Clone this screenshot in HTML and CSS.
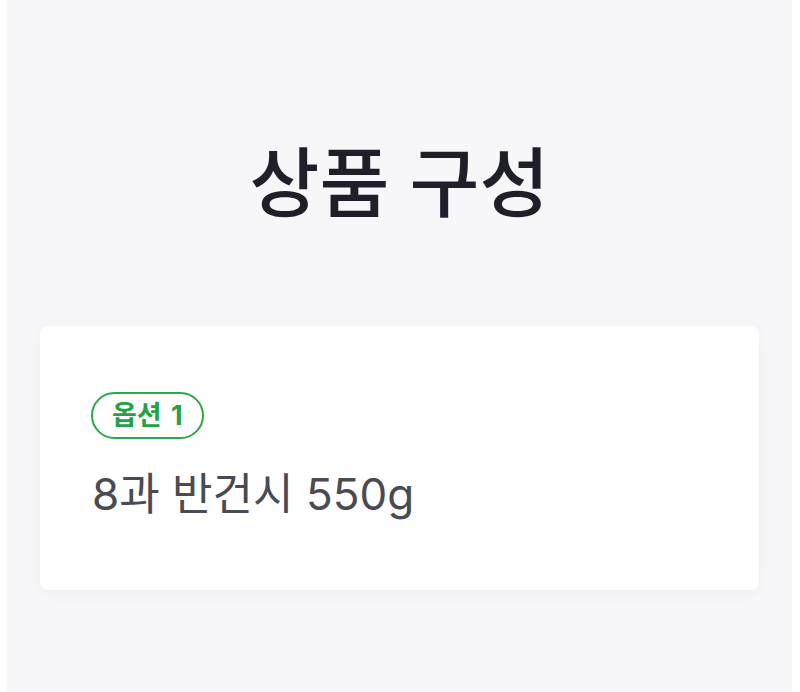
FILE: index.html
```html
<!DOCTYPE html>
<html>
    <head>
        <meta charset="UTF-8">
        <title>상품 구성</title>
        <link rel="stylesheet" href="styles.css">
    </head>
    <body>
        <article class="page">
            <!--제목-->
            <h1 class="title">상품 구성</h1>
            <!--구성 카드-->
            <div class="card">
                <span class="badge">옵션 1</span>
                <p class="item">8과 반건시 550g</p>
            </div>
        </article>
    </body>
</html>
```

FILE: styles.css
```css
body{
    margin: 0;
    background-color: white;
    font-family: 'Inter', 'Noto Sans CJK KR', sans-serif;
}
.page{
    margin: 0 8px 0 7px;
    height: 692px;
    background-color: #f7f7f9;
    padding: 128px 33px 0 33px;
    box-sizing: border-box;
}
.title{
    margin: 0;
    text-align: center;
    font-size: 76px;
    font-weight: 500;
    line-height: 110px;
    color: #1f1f29;
}
.card{
    margin-top: 88px;
    height: 264px;
    box-sizing: border-box;
    padding: 66px 52px 0 51px;
    background-color: white;
    border-radius: 8px;
    box-shadow: 0 4px 16px rgba(0, 0, 0, 0.04);
}
.badge{
    display: inline-block;
    height: 47px;
    line-height: 43px;
    padding: 0 19px;
    box-sizing: border-box;
    border: 2px solid #2aa84a;
    border-radius: 24px;
    color: #22a246;
    font-size: 27px;
    font-weight: 700;
    word-spacing: 3px;
}
.item{
    margin: 28px 0 0 1px;
    font-size: 44px;
    line-height: 54px;
    color: #4a4a52;
}
```
